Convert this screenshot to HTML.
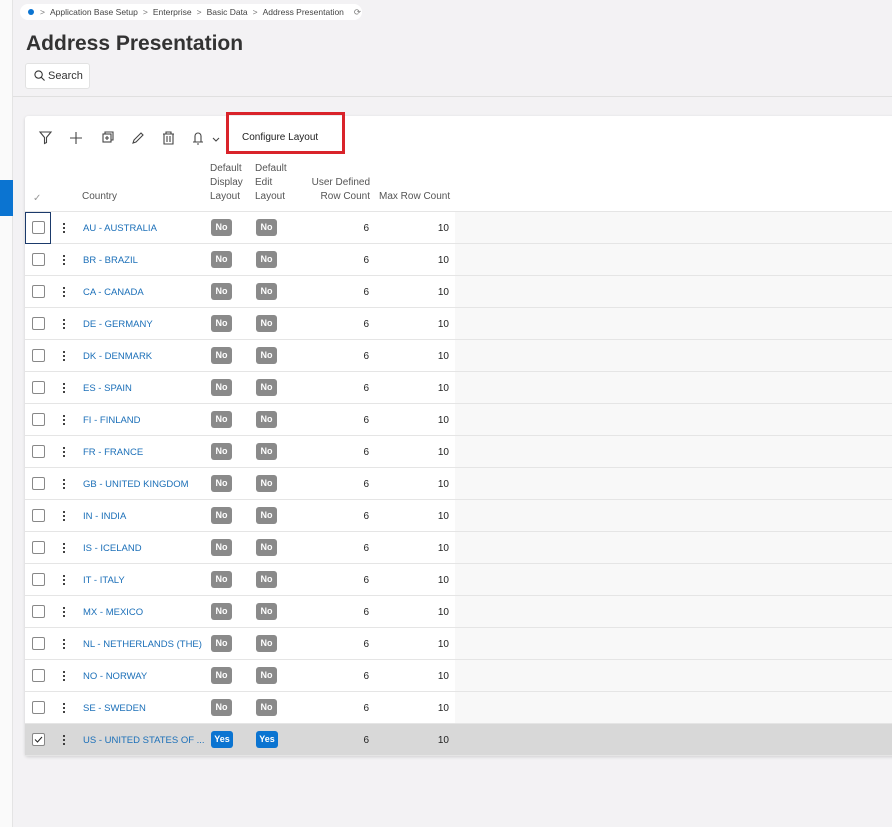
<!DOCTYPE html>
<html><head><meta charset="utf-8"><style>
*{box-sizing:border-box;margin:0;padding:0}
body{width:892px;height:827px;overflow:hidden;background:#f3f2f4;font-family:"Liberation Sans",sans-serif;font-size:10px;color:#333;position:relative}
.side{position:absolute;left:0;top:0;width:13px;height:827px;background:#fafafa;border-right:1px solid #e4e4e4}
.sidebar-blue{position:absolute;left:0;top:180px;width:13px;height:36px;background:#0b74d1}
.bc{position:absolute;left:20px;top:4px;height:16px;width:342px;background:#fff;border-radius:8px;font-size:8.5px;color:#444;line-height:16px;padding-left:8px;white-space:nowrap}
.bc .dot{display:inline-block;width:6px;height:6px;border-radius:50%;background:#0b74d1;margin-right:6px;vertical-align:0}
.bc .s{color:#777;margin:0 5px}
h1{position:absolute;left:26px;top:32px;font-size:21px;font-weight:bold;color:#333}
.search{position:absolute;left:25px;top:63px;width:65px;height:26px;background:#fff;border:1px solid #e2e2e2;border-radius:3px;font-size:11px;line-height:24px;padding-left:9px}
.topline{position:absolute;left:13px;right:0;top:96px;border-top:1px solid #e0e0e0}
.card{position:absolute;left:25px;top:116px;width:880px;height:640px;background:#fff;box-shadow:0 1px 3px rgba(0,0,0,.15);border-radius:3px}
.tb{position:absolute;top:130px}
.red{position:absolute;left:226px;top:112px;width:119px;height:42px;border:3px solid #d9232a}
.cl{position:absolute;left:242px;top:132px;font-size:10px;color:#222}
.hd{position:absolute;font-size:10px;color:#555;line-height:14px}
.hline{position:absolute;left:25px;right:0;top:211px;border-top:1px solid #e5e5e5}
.row{position:absolute;left:25px;width:867px;height:32px;border-bottom:1px solid #e5e5e5;background:#fff}
.row .rest{position:absolute;left:430px;right:0;top:0;bottom:0;background:#f8f8f8}
.row.sel{background:#d8d8d8}.row.sel .rest{background:#d8d8d8}
.cb{position:absolute;left:7px;top:9px;width:13px;height:13px;border:1px solid #888;border-radius:2px;background:#fff}
.dots{position:absolute;left:38px;top:10px;width:2px;height:11px;background:radial-gradient(circle,#333 1px,transparent 1.2px) 0 0/2px 4px}
.ct{position:absolute;left:58px;top:11px;color:#1b6fb8;font-size:9.5px}
.b{position:absolute;top:7px;height:17px;border-radius:3px;color:#fff;font-weight:bold;font-size:9px;line-height:17px;text-align:center}
.no{background:#8a8a8a;width:21px}.yes{background:#0b74d1;width:22px}
.n{position:absolute;top:11px;font-size:10px;color:#222;text-align:right}
</style></head><body>
<div class="side"></div><div class="sidebar-blue"></div>
<div class="bc"><span class="dot"></span><span class="s" style="margin-left:0">&gt;</span>Application Base Setup<span class="s">&gt;</span>Enterprise<span class="s">&gt;</span>Basic Data<span class="s">&gt;</span>Address Presentation<span class="s" style="margin-left:10px">⟳</span></div>
<h1>Address Presentation</h1>
<div class="search"><svg width="11" height="11" viewBox="0 0 12 12" style="position:absolute;left:8px;top:6px"><circle cx="5" cy="5" r="4" fill="none" stroke="#333" stroke-width="1.2"/><path d="M8 8l3.5 3.5" stroke="#333" stroke-width="1.2"/></svg><span style="margin-left:13px">Search</span></div>
<div class="topline"></div>
<div class="card"></div>
<svg class="tb" style="left:38px" width="190" height="16" viewBox="0 0 190 16" fill="none" stroke="#444" stroke-width="1.1">
<path d="M2 2h11l-4.5 5.5v5l-2 1v-6z"/>
<path d="M38 2v12M32 8h12"/>
<rect x="65" y="4" width="8" height="8"/><path d="M67 4V2h8v8h-2M69 6v4M67 8h4"/>
<path d="M95 13l1-3 7-7 2 2-7 7z"/>
<path d="M125 4h11M128 4V2h5v2M126 4v10h9V4M129 6v6M132 6v6"/>
<path d="M157 12V6a3 3 0 016 0v6zM155 12h10M159 14h2"/>
<path d="M175 8l3 3 3-3"/>
</svg>
<div class="red"></div><div class="cl">Configure Layout</div>
<div class="hd" style="left:33px;top:192px;color:#999">✓</div>
<div class="hd" style="left:82px;top:190px">Country</div>
<div class="hd" style="left:210px;top:162px">Default<br>Display<br>Layout</div>
<div class="hd" style="left:255px;top:162px">Default<br>Edit<br>Layout</div>
<div class="hd" style="left:300px;top:176px;width:70px;text-align:right">User Defined<br>Row Count</div>
<div class="hd" style="left:379px;top:190px">Max Row Count</div>
<div class="hline"></div>
<div id="rows"></div>
<script>
var c=["AU - AUSTRALIA","BR - BRAZIL","CA - CANADA","DE - GERMANY","DK - DENMARK","ES - SPAIN","FI - FINLAND","FR - FRANCE","GB - UNITED KINGDOM","IN - INDIA","IS - ICELAND","IT - ITALY","MX - MEXICO","NL - NETHERLANDS (THE)","NO - NORWAY","SE - SWEDEN","US - UNITED STATES OF ..."];
var h="";c.forEach(function(n,i){var s=i==16;
h+='<div class="row'+(s?' sel':'')+'" style="top:'+(212+32*i)+'px"><div class="rest"></div>'+
'<div class="cb">'+(s?'<svg width="11" height="11" viewBox="0 0 11 11" style="position:absolute;left:0;top:0"><path d="M2 5.5l2.5 2.5 4.5-5" fill="none" stroke="#222" stroke-width="1"/></svg>':'')+'</div>'+
'<div class="dots"></div><div class="ct">'+n+'</div>'+
(s?'<div class="b yes" style="left:186px">Yes</div><div class="b yes" style="left:231px">Yes</div>':'<div class="b no" style="left:186px">No</div><div class="b no" style="left:231px">No</div>')+
'<div class="n" style="left:300px;width:44px">6</div><div class="n" style="left:380px;width:44px">10</div></div>';});
document.getElementById("rows").innerHTML=h;
</script>
<div style="position:absolute;left:25px;top:212px;width:26px;height:32px;border:1px solid #1b3a6b"></div>
</body></html>
